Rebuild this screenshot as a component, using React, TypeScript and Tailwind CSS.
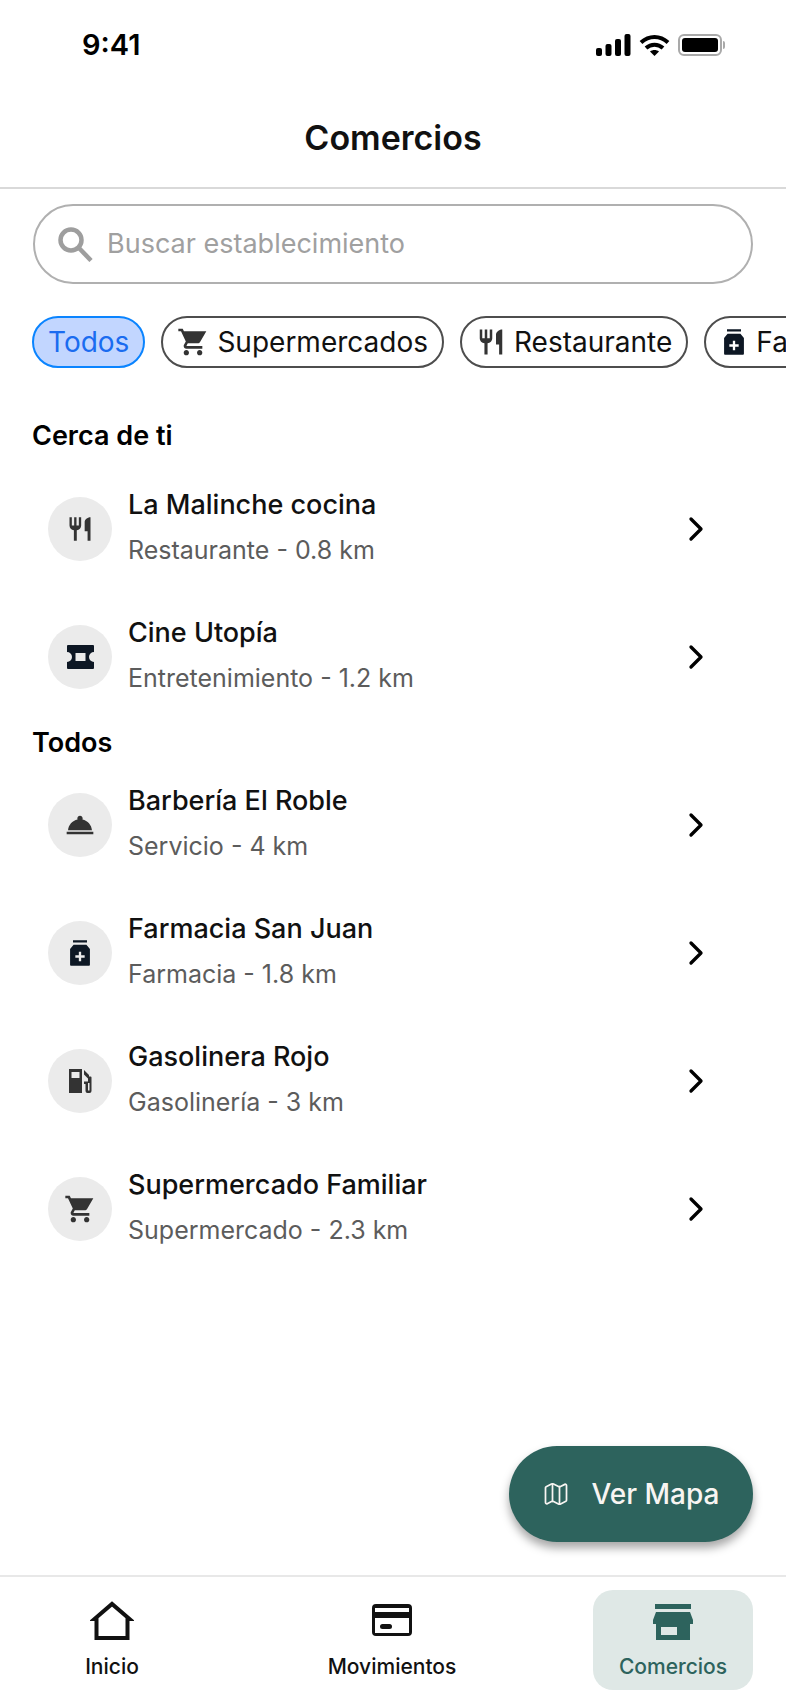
import { ChevronRight, Map as MapIcon } from "lucide-react";
import type { ReactNode } from "react";

const Cart = ({ className }: { className: string }) => (
  <svg viewBox="0 0 24 24" className={className} fill="currentColor">
    <path d="M7 18c-1.1 0-1.99.9-1.99 2S5.9 22 7 22s2-.9 2-2-.9-2-2-2zM1 2v2h2l3.6 7.59-1.35 2.45c-.16.28-.25.61-.25.96 0 1.1.9 2 2 2h12v-2H7.42c-.14 0-.25-.11-.25-.25l.03-.12.9-1.63h7.45c.75 0 1.41-.41 1.75-1.03L22 4H5.21l-.94-2H1zm16 16c-1.1 0-1.99.9-1.99 2s.89 2 1.99 2 2-.9 2-2-.9-2-2-2z" />
  </svg>
);

const Fork = ({ className }: { className: string }) => (
  <svg viewBox="0 0 24 24" className={className} fill="currentColor">
    <path d="M11 9H9V2H7v7H5V2H3v7c0 2.12 1.66 3.84 3.75 3.97V22h2.5v-9.03C11.34 12.84 13 11.12 13 9V2h-2v7zm5-3v8h2.5v8H21V2c-2.76 0-5 2.24-5 4z" />
  </svg>
);

const Pill = ({ className }: { className: string }) => (
  <svg viewBox="0 0 24 24" className={className} fill="currentColor">
    <path fillRule="evenodd" d="M6 1h12v2H6zM6.5 5h11l3 3.5V22c0 .6-.5 1-1 1h-15c-.5 0-1-.4-1-1V8.500zM11 11v3H8v2h3v3h2v-3h3v-2h-3v-3z" />
  </svg>
);

const Ticket = ({ className }: { className: string }) => (
  <svg viewBox="0 0 27 24" className={className} fill="currentColor">
    <path fillRule="evenodd" d="M1 0h25a1 1 0 0 1 1 1v6a5 5 0 0 0 0 10v6a1 1 0 0 1-1 1H1a1 1 0 0 1-1-1v-6a5 5 0 0 0 0-10V1a1 1 0 0 1 1-1zm7.500 8v8h10V8z" />
  </svg>
);

const Bell = ({ className }: { className: string }) => (
  <svg viewBox="0 0 24 24" className={className} fill="currentColor">
    <path d="M2 17h20v2H2zm11.840-9.210c.1-.24.16-.51.16-.79 0-1.100-.9-2-2-2s-2 .9-2 2c0 .28.06.55.16.79C6.250 8.600 3.270 11.930 3.030 16h17.940c-.24-4.070-3.220-7.400-7.130-8.210z" />
  </svg>
);

const Pump = ({ className }: { className: string }) => (
  <svg viewBox="0 0 24 24" className={className} fill="currentColor">
    <path fillRule="evenodd" d="M1 0h13v24H1zM3.500 3v6h8V3z" />
    <path fillRule="evenodd" d="M16 1l5 5v1.500h1.500a1 1 0 0 1 1 1V22a2 2 0 0 1-2 2h-2a2 2 0 0 1-2-2v-7h-1.500v-2.500H20V9.500L16 5.500zM20 14v7.500h1.500V14z" />
  </svg>
);

const Home = () => (
  <svg viewBox="0 0 44 39" className="w-[44px] h-[39px]" fill="none" stroke="#111111" strokeWidth="4">
    <path d="M6.500 37V18H4.500L22 3l17.500 15h-2V37z" strokeLinejoin="miter" />
  </svg>
);

const Card = () => (
  <svg viewBox="0 0 40 32" className="w-[40px] h-[32px]" fill="#111111">
    <path fillRule="evenodd" d="M4 0h32a4 4 0 0 1 4 4v24a4 4 0 0 1-4 4H4a4 4 0 0 1-4-4V4a4 4 0 0 1 4-4zM3 4v4h34V4zM3 14v15h34V14z" />
    <rect x="8" y="20" width="12" height="5" rx="2.500" />
  </svg>
);

const Store = () => (
  <svg viewBox="0 0 40 36" className="w-[40px] h-[36px]" fill="#2d635d">
    <rect x="2" y="0" width="36" height="5" />
    <path d="M3 8h34l3 8v4H0v-4z" />
    <path fillRule="evenodd" d="M3 20h34v16H3zM8 23v8h16v-8z" />
  </svg>
);

const Signal = () => (
  <svg viewBox="0 0 35 22" className="w-[35px] h-[22px]" fill="#000000">
    <rect x="0" y="14" width="6" height="8" rx="2" />
    <rect x="9.500" y="10" width="6" height="12" rx="2" />
    <rect x="19" y="5" width="6" height="17" rx="2" />
    <rect x="28.500" y="0" width="6" height="22" rx="2" />
  </svg>
);

const Wifi = () => (
  <svg viewBox="0 0 31 22" className="w-[31px] h-[22px]" fill="none" stroke="#000000" strokeWidth="4">
    <path d="M2 8.500c8-7.500 19-7.500 27 0" />
    <path d="M7 14c5-4.500 12-4.500 17 0" />
    <path d="M15.500 22l-4.500-4.500c2.500-2 6.500-2 9 0z" fill="#000000" stroke="none" />
  </svg>
);

const Battery = () => (
  <div className="flex items-center gap-[1px]">
    <div className="w-[44px] h-[22px] rounded-[6px] border-2 border-[#a9a9a9] p-[2px]">
      <div className="w-full h-full rounded-[3px] bg-black" />
    </div>
    <div className="w-[2px] h-[8px] rounded-r-sm bg-[#a9a9a9]" />
  </div>
);

type Place = { name: string; info: string; icon: ReactNode };

const iconDark = "text-[#333333]";
const iconNavy = "text-[#0d1724]";

const nearby: Place[] = [
  { name: "La Malinche cocina", info: "Restaurante - 0.8 km", icon: <Fork className={`w-[28px] h-[28px] ${iconDark}`} /> },
  { name: "Cine Utopía", info: "Entretenimiento - 1.2 km", icon: <Ticket className={`w-[27px] h-[24px] ${iconNavy}`} /> },
];

const all: Place[] = [
  { name: "Barbería El Roble", info: "Servicio - 4 km", icon: <Bell className={`w-[32px] h-[32px] ${iconDark}`} /> },
  { name: "Farmacia San Juan", info: "Farmacia - 1.8 km", icon: <Pill className={`w-[28px] h-[28px] ${iconNavy}`} /> },
  { name: "Gasolinera Rojo", info: "Gasolinería - 3 km", icon: <Pump className={`w-[24px] h-[24px] ${iconDark}`} /> },
  { name: "Supermercado Familiar", info: "Supermercado - 2.3 km", icon: <Cart className={`w-[32px] h-[32px] ${iconDark}`} /> },
];

function PlaceRow({ place }: { place: Place }) {
  return (
    <div className="flex h-[128px] items-start pl-[48px] pr-[70px]">
      <div className="mt-[32px] flex h-[64px] w-[64px] shrink-0 items-center justify-center rounded-full bg-[#ebebeb]">
        {place.icon}
      </div>
      <div className="ml-[16px] flex-1 pt-[20px]">
        <p className="h-[40px] text-[27px] leading-[40px] font-medium text-[#111111]">{place.name}</p>
        <p className="mt-[5px] h-[40px] text-[25px] leading-[40px] text-[#5c5c5c]">{place.info}</p>
      </div>
      <ChevronRight className="mt-[44px] h-[40px] w-[40px] text-black" strokeWidth={2} />
    </div>
  );
}

function Chip({ label, icon, active }: { label: string; icon?: ReactNode; active?: boolean }) {
  return (
    <div
      className={
        active
          ? "flex h-[52px] shrink-0 items-center rounded-full border-2 border-[#0a84ff] bg-[#c2d6ff] px-[14px] text-[28px] text-[#1a6cf0]"
          : "flex h-[52px] shrink-0 items-center gap-[8px] rounded-full border-2 border-[#4d4d4d] pl-[14px] pr-[14px] text-[28px] text-[#111111]"
      }
    >
      {icon}
      <span>{label}</span>
    </div>
  );
}

export default function App() {
  return (
    <div className="relative flex h-[1704px] w-[786px] flex-col overflow-hidden bg-white font-['Inter',sans-serif]">
      {/* Status bar */}
      <div className="flex h-[90px] items-center justify-between pl-[82px] pr-[61px]">
        <span className="text-[29px] font-semibold text-black">9:41</span>
        <div className="flex items-center gap-[8px]">
          <Signal />
          <Wifi />
          <Battery />
        </div>
      </div>

      {/* Title */}
      <div className="flex h-[99px] items-center justify-center border-b-2 border-[#d9d9d9] pb-[2px]">
        <h1 className="text-[34px] font-semibold text-[#111111]">Comercios</h1>
      </div>

      {/* Search */}
      <div className="mx-[33px] mt-[15px] flex h-[80px] w-[720px] items-center rounded-full border-2 border-[#b0b0b0] pl-[22px]">
        <svg viewBox="0 0 36 36" className="h-[36px] w-[36px]" fill="none" stroke="#9e9e9e">
          <circle cx="14" cy="14" r="10.500" strokeWidth="4.500" />
          <path d="M21.500 21.500 34 34.500" strokeWidth="4.500" />
        </svg>
        <span className="ml-[14px] text-[27px] text-[#a0a0a0]">Buscar establecimiento</span>
      </div>

      {/* Category chips */}
      <div className="mt-[32px] flex gap-[16px] overflow-hidden pl-[32px]">
        <Chip label="Todos" active />
        <Chip label="Supermercados" icon={<Cart className="h-[32px] w-[32px] text-[#333333]" />} />
        <Chip label="Restaurante" icon={<Fork className="h-[30px] w-[30px] text-[#333333]" />} />
        <Chip label="Farmacia" icon={<Pill className="h-[28px] w-[28px] text-[#0d1724]" />} />
      </div>

      {/* Places */}
      <h2 className="mt-[48px] h-[40px] pl-[32px] text-[27px] leading-[40px] font-semibold text-black">Cerca de ti</h2>
      <div className="mt-[9px]">
        {nearby.map((place) => (
          <PlaceRow key={place.name} place={place} />
        ))}
      </div>
      <h2 className="mt-[2px] h-[40px] pl-[32px] text-[27px] leading-[40px] font-semibold text-black">Todos</h2>
      <div className="mt-[-2px] flex-1">
        {all.map((place) => (
          <PlaceRow key={place.name} place={place} />
        ))}
      </div>

      {/* Map button floats over the list */}
      <button className="absolute left-[509px] top-[1446px] flex h-[96px] w-[244px] items-center justify-center gap-[21px] rounded-full bg-[#2d635d] text-[28px] font-medium text-[#f8f5f2] shadow-[0_6px_10px_rgba(0,0,0,0.35)]">
        <MapIcon className="h-[28px] w-[28px]" strokeWidth={1.5} />
        <span>Ver Mapa</span>
      </button>

      {/* Bottom navigation */}
      <nav className="flex h-[129px] items-start border-t-2 border-[#e8e8e8] pl-[33px] pr-[33px] pt-[13px]">
        <div className="flex h-[100px] w-[158px] flex-col items-center justify-end gap-[12px] pb-[8px] text-[21px] font-medium text-[#111111]">
          <Home />
          <span className="leading-[30px]">Inicio</span>
        </div>
        <div className="flex h-[100px] flex-1 flex-col items-center justify-end gap-[16px] pb-[8px] text-[21px] font-medium text-[#111111]">
          <Card />
          <span className="leading-[30px]">Movimientos</span>
        </div>
        <div className="flex h-[100px] w-[160px] flex-col items-center justify-end gap-[12px] rounded-[20px] bg-[#dfe8e6] pb-[8px] text-[21px] font-medium text-[#2d635d]">
          <Store />
          <span className="leading-[30px]">Comercios</span>
        </div>
      </nav>
    </div>
  );
}
